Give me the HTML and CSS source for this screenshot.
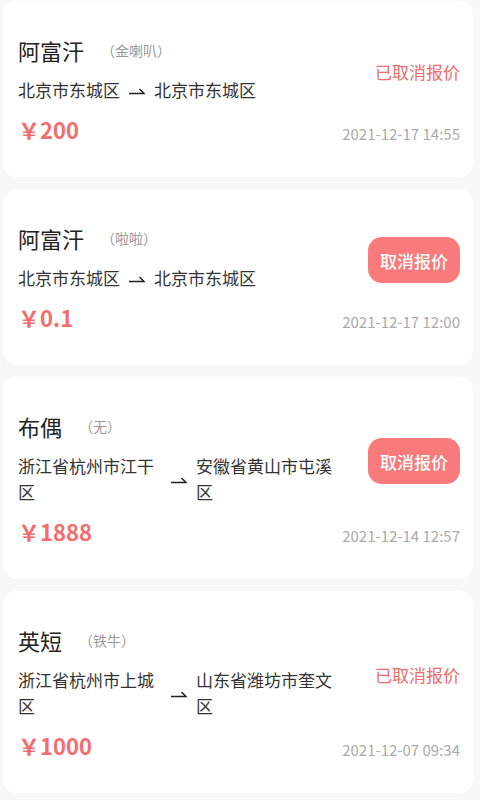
FILE: index.html
```html
<!DOCTYPE html>
<html lang="zh-CN">
<head>
<meta charset="utf-8">
<title>报价列表</title>
<link rel="stylesheet" href="styles.css">
</head>
<body>
<div class="list">
  <div class="card">
    <div class="head">
      <div class="name-row"><span class="name">阿富汗</span><span class="tag">（金喇叭）</span></div>
      <div class="route">
        <div class="addr">北京市东城区</div>
        <svg class="arrow" width="16" height="9" viewBox="0 0 16 9"><path d="M0 7.5H15L10.5 3" fill="none" stroke="#222" stroke-width="1.5"/></svg>
        <div class="addr">北京市东城区</div>
      </div>
    </div>
    <div class="side"><span class="status">已取消报价</span></div>
    <div class="price">￥200</div>
    <div class="date">2021-12-17 14:55</div>
  </div>

  <div class="card">
    <div class="head">
      <div class="name-row"><span class="name">阿富汗</span><span class="tag">（啦啦）</span></div>
      <div class="route">
        <div class="addr">北京市东城区</div>
        <svg class="arrow" width="16" height="9" viewBox="0 0 16 9"><path d="M0 7.5H15L10.5 3" fill="none" stroke="#222" stroke-width="1.5"/></svg>
        <div class="addr">北京市东城区</div>
      </div>
    </div>
    <div class="side"><button class="btn">取消报价</button></div>
    <div class="price">￥0.1</div>
    <div class="date">2021-12-17 12:00</div>
  </div>

  <div class="card">
    <div class="head">
      <div class="name-row"><span class="name">布偶</span><span class="tag">（无）</span></div>
      <div class="route">
        <div class="addr">浙江省杭州市江干区</div>
        <svg class="arrow" width="16" height="9" viewBox="0 0 16 9"><path d="M0 7.5H15L10.5 3" fill="none" stroke="#222" stroke-width="1.5"/></svg>
        <div class="addr">安徽省黄山市屯溪区</div>
      </div>
    </div>
    <div class="side"><button class="btn">取消报价</button></div>
    <div class="price">￥1888</div>
    <div class="date">2021-12-14 12:57</div>
  </div>

  <div class="card">
    <div class="head">
      <div class="name-row"><span class="name">英短</span><span class="tag">（铁牛）</span></div>
      <div class="route">
        <div class="addr">浙江省杭州市上城区</div>
        <svg class="arrow" width="16" height="9" viewBox="0 0 16 9"><path d="M0 7.5H15L10.5 3" fill="none" stroke="#222" stroke-width="1.5"/></svg>
        <div class="addr">山东省潍坊市奎文区</div>
      </div>
    </div>
    <div class="side"><span class="status">已取消报价</span></div>
    <div class="price">￥1000</div>
    <div class="date">2021-12-07 09:34</div>
  </div>
</div>
</body>
</html>
```
FILE: styles.css
```css
* { box-sizing: border-box; }
html, body {
  margin: 0;
  padding: 0;
  background: #f8f8f8;
  font-family: "Noto Sans CJK SC", "Noto Sans", sans-serif;
}
.list {
  padding-top: 1px;
  display: flex;
  flex-direction: column;
  gap: 12px;
}
.card {
  margin: 0 7px 0 3px;
  background: #ffffff;
  border-radius: 14px;
  padding: 35px 13px 33px 15px;
  display: grid;
  grid-template-columns: 1fr auto;
  grid-template-areas:
    "head side"
    "price date";
}
.head { grid-area: head; }
.name-row {
  display: flex;
  align-items: center;
  height: 28px;
}
.name {
  font-size: 22px;
  line-height: 28px;
  color: #222;
}
.tag {
  margin-left: 17px;
  font-size: 14px;
  color: #999;
  line-height: 18px;
}
.route {
  margin-top: 13px;
  display: flex;
  align-items: center;
}
.addr {
  max-width: 144px;
  font-size: 17px;
  line-height: 26px;
  color: #333;
}
.arrow {
  flex: none;
  margin: 0 9px 0 9px;
}
.side {
  grid-area: side;
  align-self: center;
  justify-self: end;
  margin-top: 5px;
}
.status {
  font-size: 17px;
  line-height: 24px;
  color: #f06b6b;
}
.btn {
  font-family: inherit;
  border: none;
  background: #f87a7a;
  color: #fff;
  font-size: 17px;
  font-weight: 500;
  width: 92px;
  height: 46px;
  border-radius: 14px;
  padding: 0;
}
.price {
  grid-area: price;
  margin-top: 11px;
  font-size: 22px;
  line-height: 30px;
  font-weight: 600;
  color: #f46c6c;
}
.date {
  grid-area: date;
  align-self: end;
  justify-self: end;
  font-size: 15px;
  line-height: 20px;
  color: #aaa;
}
```
